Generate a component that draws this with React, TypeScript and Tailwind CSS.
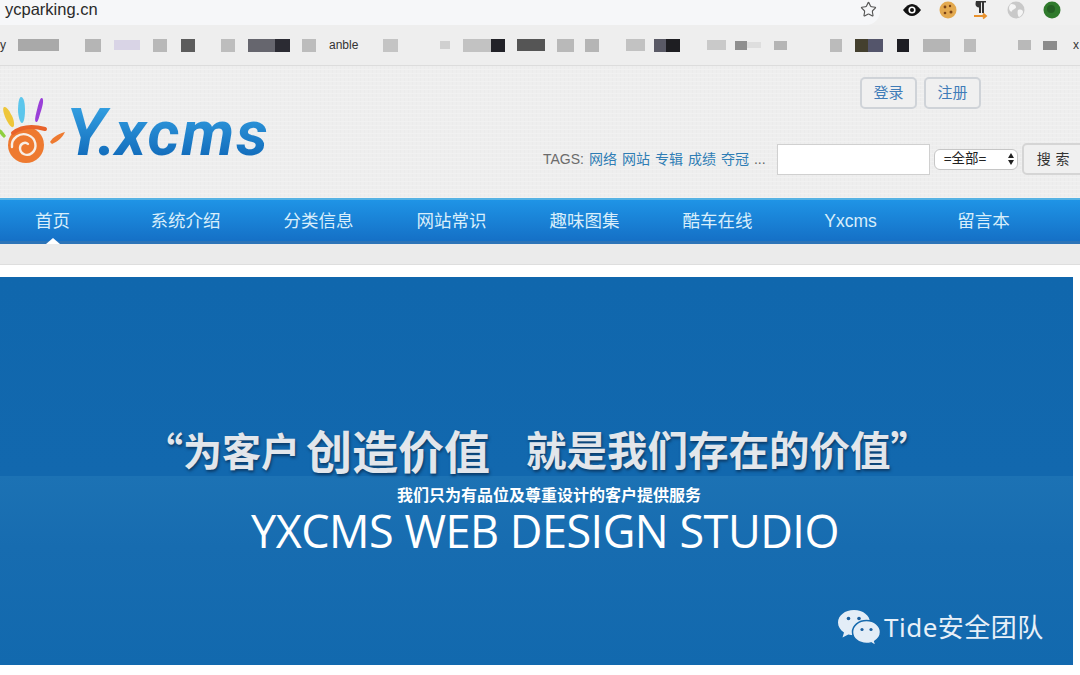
import React from 'react';
import { Star } from 'lucide-react';

const cjk = "font-['Liberation_Sans','Noto_Sans_CJK_SC',sans-serif]";

// blurred bookmark blobs, left to right: [start x, end x, height, colour, label]
const bookmarks: [number, number, number, string, string?][] = [
    [18, 59, 12, '#a9a9a9'], [85, 101, 13, '#b5b5b5'], [114, 140, 10, '#d9d4e6'], [153, 167, 13, '#b8b8b8'],
    [181, 195, 13, '#5c5c5c'], [221, 235, 13, '#bdbdbd'], [248, 275, 13, '#66666e'], [275, 290, 13, '#2b2b33'],
    [302, 316, 13, '#bcbcbc'], [329, 362, 13, 'transparent', 'anble'], [383, 398, 13, '#c4c4c4'], [440, 450, 8, '#d0d0d0'],
    [463, 491, 13, '#c2c2c2'], [491, 505, 13, '#222228'], [517, 545, 12, '#555555'], [557, 574, 13, '#b9b9b9'],
    [585, 599, 13, '#b5b5b5'], [626, 645, 12, '#c2c2c2'], [654, 666, 13, '#5a5a66'], [666, 680, 13, '#1e1e22'],
    [707, 726, 10, '#c9c9c9'], [735, 747, 9, '#8f8f8f'], [747, 761, 6, '#dedede'], [774, 787, 9, '#b5b5b5'],
    [830, 842, 13, '#bbbbbb'], [855, 868, 13, '#44402f'], [868, 883, 13, '#54556b'], [897, 909, 13, '#1e1e24'],
    [923, 950, 13, '#b5b5b5'], [964, 976, 13, '#bcbcbc'], [1018, 1031, 10, '#b9b9b9'], [1043, 1057, 9, '#8c8c8c'],
];

const navItems = ['首页', '系统介绍', '分类信息', '网站常识', '趣味图集', '酷车在线', 'Yxcms', '留言本'];
const tags = ['网络', '网站', '专辑', '成绩', '夺冠'];

const HandLogo = () => (
    <svg width="68" height="70" viewBox="0 0 68 70" className="shrink-0">
        <path d="M23 1c3 0 4 7 4 13s-1 13-3 13-4-7-4-13 1-13 3-13z" fill="#5cc6ec" />
        <path d="M44 2c2 1 1 7-1 13s-3 12-5 11 0-8 1-12 3-13 5-12z" fill="#9a3fd8" />
        <path d="M6 11c3-1 6 5 8 9s3 10 1 11-5-4-7-8-4-11-2-12z" fill="#eec63a" />
        <path d="M1 33c2 0 5 4 7 7l-2 2c-3-2-6-7-5-9z" fill="#8ecf3e" />
        <circle cx="28" cy="49" r="18" fill="#ee7a30" />
        <path d="M15 37c9-7 21-7 32-4" stroke="#e8622a" strokeWidth="4" fill="none" strokeLinecap="round" />
        <path d="M14 51c-1-9 8-15 16-12 8 3 10 13 4 18-5 4-12 1-12-5 0-4 5-7 8-4" stroke="#f8efe6" strokeWidth="2.4" fill="none" strokeLinecap="round" />
        <path d="M52 46c3-5 8-8 15-10-2 5-8 10-13 12z" fill="#ee7a30" />
    </svg>
);

const ExtensionIcons = () => (
    <div className="flex items-center">
        <svg width="20" height="14" viewBox="0 0 20 14" className="ml-[22px]">
            <path d="M1 7c3-4 6-6 9-6s6 2 9 6c-3 4-6 6-9 6s-6-2-9-6z" fill="#111" />
            <circle cx="10" cy="7" r="3.6" fill="#fff" />
            <circle cx="10" cy="7" r="2" fill="#111" />
        </svg>
        <svg width="18" height="18" viewBox="0 0 18 18" className="ml-[17px]">
            <circle cx="9" cy="9" r="8.5" fill="#e3a94f" />
            <circle cx="6" cy="6" r="1.4" fill="#7a4318" />
            <circle cx="11" cy="5" r="1.2" fill="#7a4318" />
            <circle cx="12" cy="11" r="1.5" fill="#7a4318" />
            <circle cx="6" cy="12" r="1.3" fill="#7a4318" />
        </svg>
        <svg width="16" height="20" viewBox="0 0 16 20" className="ml-[16px]">
            <path d="M3 1h10v1.600h-2V13H9V2.600H8V13H6V7.500C4 7.500 2.500 6 2.500 4.200S3 1 3 1z" fill="#333" />
            <path d="M1 16h12M10 13.500l3 2.500-3 2.500" stroke="#e8912c" strokeWidth="1.800" fill="none" />
        </svg>
        <svg width="18" height="18" viewBox="0 0 18 18" className="ml-[18px]">
            <circle cx="9" cy="9" r="8.500" fill="#c9c9c9" />
            <path d="M4 3c3 0 5 1 5 3S6 8 5 10 2 9 2 7s1-3 2-4zM11 9c3-1 5 0 5 2s-3 5-4 5-2-5-1-7z" fill="#f5f5f5" />
        </svg>
        <svg width="18" height="18" viewBox="0 0 18 18" className="ml-[18px]">
            <circle cx="9" cy="9" r="8.500" fill="#2f7a2c" />
            <circle cx="8" cy="8" r="4" fill="#245f24" />
        </svg>
    </div>
);

const WeChatIcon = () => (
    <svg width="44" height="38" viewBox="0 0 44 38">
        <path d="M17 1C8 1 1 6.500 1 13.500c0 4 2.300 7.500 6 10l-1.500 5 5.800-3c1.800.5 3.700.8 5.700.8 9 0 16-5.800 16-12.800S26 1 17 1z" fill="#e3edf7" />
        <circle cx="11.500" cy="9.500" r="1.800" fill="#1c5f9e" />
        <circle cx="22" cy="9.500" r="1.800" fill="#1c5f9e" />
        <path d="M29.500 11.500c-7.800 0-14 5-14 11.500s6.200 11.500 14 11.500c1.600 0 3-.2 4.500-.6l5 3-1.300-4.600c3.500-2.200 5.800-5.500 5.800-9.300 0-6.500-6.200-11.500-14-11.500z" fill="#e3edf7" stroke="#1569ad" strokeWidth="1.500" />
        <circle cx="25" cy="20.500" r="1.600" fill="#1c5f9e" />
        <circle cx="34" cy="20.500" r="1.600" fill="#1c5f9e" />
    </svg>
);

export default function App() {
    return (
        <div className={`w-[1080px] h-[675px] overflow-hidden bg-white ${cjk}`}>
            {/* Browser chrome */}
            <div className="h-[25px] flex items-center bg-[#f0f0f0]">
                <div className="w-[880px] h-full flex items-center justify-between pb-[6px] pl-[5px] pr-[3px] bg-[#f6f7f9] rounded-br-[14px]">
                    <span className="text-[16.500px] text-[#2a2a2a]">ycparking.cn</span>
                    <Star size={17} className="text-[#555]" strokeWidth={1.6} />
                </div>
                <div className="pb-[6px]">
                    <ExtensionIcons />
                </div>
            </div>
            <div className="h-[41px] flex items-center bg-[#eeeeee] border-b border-[#dcdcdc] overflow-hidden">
                <span className="w-0 text-[12px] text-[#333]">y</span>
                {bookmarks.map(([start, end, h, color, label], i) => (
                    <div
                        key={i}
                        className="shrink-0 text-[12px] leading-[13px] text-[#333]"
                        style={{ marginLeft: start - (i > 0 ? bookmarks[i - 1][1] : 0), width: end - start, height: h, background: color }}
                    >
                        {label}
                    </div>
                ))}
                <span className="ml-[16px] text-[12px] text-[#333]">x</span>
            </div>

            {/* Site header */}
            <header className="h-[132px] flex justify-between bg-[#eeeeee] bg-[repeating-linear-gradient(0deg,#f1f1f1_0_1px,transparent_1px_4px),repeating-linear-gradient(90deg,#ebebeb_0_1px,transparent_1px_4px)]">
                <div className="flex items-start pt-[30px] ml-[-2px]">
                    <HandLogo />
                    <span className="mt-[4px] text-[66px] leading-[66px] font-bold italic tracking-[-1px] font-['Roboto',sans-serif] text-transparent bg-clip-text bg-gradient-to-b from-[#38a6e6] to-[#0b62b4]">
                        Y.
                        <span className="text-[63px] tracking-[2px]">xcms</span>
                    </span>
                </div>
                <div className="w-[540px] mr-[-1px] shrink-0 flex flex-col items-end pt-[11px]">
                    <div className="flex gap-[7px] mr-[100px]">
                        {['登录', '注册'].map((label) => (
                            <div key={label} className="w-[57px] h-[32px] flex items-center justify-center rounded-[5px] border-2 border-[#cfd3d8] bg-[#f0f0f0] text-[15px] text-[#3f7cb8]">
                                {label}
                            </div>
                        ))}
                    </div>
                    <div className="flex items-center mt-[34px] h-[32px] w-[540px]">
                        <span className="text-[14px] text-[#6b6b6b] ml-[2px] whitespace-nowrap">TAGS:</span>
                        {tags.map((t) => (
                            <span key={t} className="ml-[5px] text-[14px] text-[#2f7db5] whitespace-nowrap">{t}</span>
                        ))}
                        <span className="ml-[5px] text-[14px] text-[#666]">...</span>
                        <div className="ml-[11px] w-[153px] h-[31px] shrink-0 bg-white border border-[#d0d0d0]" />
                        <div className="ml-[4px] w-[84px] h-[21px] shrink-0 flex items-center justify-between pl-[9px] pr-[3px] rounded-[6px] bg-white border border-[#c6c6c6] text-[13.500px] text-[#222]">
                            =全部=
                            <span className="flex flex-col gap-[2px]">
                                <span className="w-0 h-0 border-x-[3px] border-x-transparent border-b-[5px] border-b-[#222]" />
                                <span className="w-0 h-0 border-x-[3px] border-x-transparent border-t-[5px] border-t-[#222]" />
                            </span>
                        </div>
                        <div className="ml-[4px] w-[64px] h-[32px] shrink-0 flex items-center pl-[13px] rounded-[5px] border-2 border-[#d5d5d5] bg-[#f0f0f0] text-[14px] text-[#333] tracking-[0.5px] whitespace-nowrap">
                            搜 索
                        </div>
                    </div>
                </div>
            </header>

            {/* Main nav */}
            <nav className="relative h-[46px] flex pt-[1px] ml-[-14px] w-[1094px] border-t-2 border-[#55b2e4] border-b-[3px] border-b-[#2c74b8] bg-gradient-to-b from-[#1f94e6] to-[#1570c6]">
                {navItems.map((item, i) => (
                    <div key={item} className="relative w-[133px] shrink-0 flex items-center justify-center text-[17.500px] text-[#d8eefb]">
                        {item}
                        {i === 0 && (
                            <span className="absolute bottom-[-3px] left-1/2 -translate-x-1/2 w-0 h-0 border-x-[7px] border-x-transparent border-b-[6px] border-b-white" />
                        )}
                    </div>
                ))}
            </nav>
            <div className="h-[21px] bg-[#ebebeb] border-b border-[#dedede]" />
            <div className="h-[12px] bg-white" />

            {/* Banner */}
            <section className="relative w-[1073px] h-[388px] pt-[142px] bg-[linear-gradient(180deg,#1067ad_0,#1268ae_199px,#1c72b4_199px,#176cb0_270px,#1269ae_100%)]">
                <div className="h-[60px] flex items-center justify-center whitespace-nowrap font-bold text-[#e2e6eb] [text-shadow:1px_2px_3px_#0b3a66] font-['Noto_Sans_CJK_SC',sans-serif] text-[39px] ml-[2px]">
                    <span>“为客户</span>
                    <span className="text-[46px] ml-[6px]">创造价值</span>
                    <span className="ml-[36px] text-[40.500px]">就是我们存在的价值”</span>
                </div>
                <div className="mt-[3px] ml-[25px] h-[24px] flex items-center justify-center text-[16px] leading-[20px] font-bold text-white font-['Noto_Sans_CJK_SC',sans-serif]">
                    我们只为有品位及尊重设计的客户提供服务
                </div>
                <div className="mt-[1px] ml-[17px] h-[48px] flex items-center justify-center font-['Open_Sans',sans-serif] text-[45px] leading-[48px] text-white whitespace-nowrap tracking-[-0.5px]">
                    YXCMS WEB DESIGN STUDIO
                </div>
                <div className="absolute left-[837px] top-[331px] flex items-center gap-[3px]">
                    <WeChatIcon />
                    <span className="text-[26px] text-[#e8f0f8] tracking-[0.5px] font-['Noto_Sans','Noto_Sans_CJK_SC',sans-serif] whitespace-nowrap">Tide安全团队</span>
                </div>
            </section>
        </div>
    );
}
